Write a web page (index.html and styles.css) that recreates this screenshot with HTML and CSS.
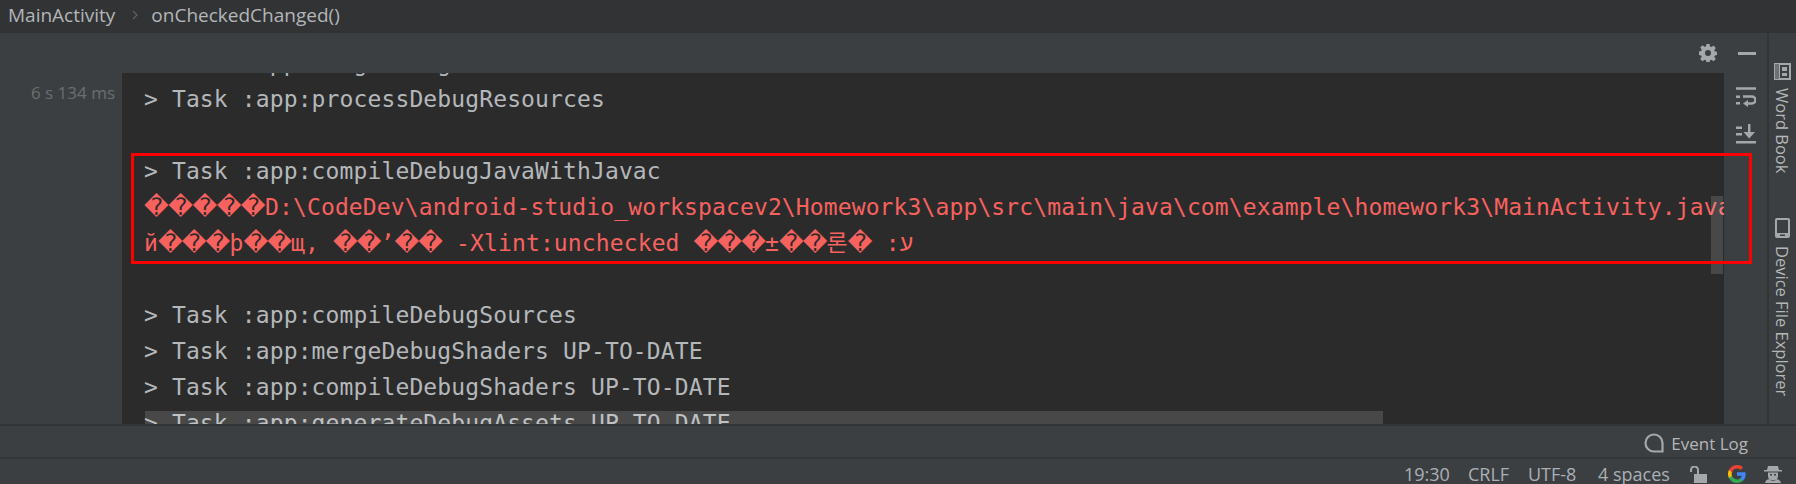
FILE: index.html
```html
<!DOCTYPE html>
<html lang="en">
<head>
<meta charset="utf-8">
<title>Build output</title>
<link rel="stylesheet" href="styles.css">
</head>
<body>
<div class="app">
  <header class="crumbs">
    <span>MainActivity</span>
    <svg class="chev" viewBox="0 0 8 12" width="8" height="12"><path d="M2 2l4 4-4 4" fill="none" stroke="#5f6264" stroke-width="1.2"/></svg>
    <span>onCheckedChanged()</span>
  </header>
  <div class="middle">
    <main class="panel">
      <div class="toolbar">
        <svg class="gear" viewBox="0 0 18 18" width="18" height="18"><path fill="#a5a8aa" fill-rule="evenodd" d="M7.400 0h3.200l.4 2.500 1.500.6 2-1.500 2.300 2.300-1.500 2 .6 1.500 2.100.4v3.200l-2.100.4-.6 1.500 1.500 2-2.300 2.300-2-1.500-1.500.6-.4 2.100H7.400L7 16.300l-1.500-.6-2 1.500-2.300-2.300 1.500-2-.6-1.500L0 11V7.400l2.100-.4.6-1.500-1.500-2 2.300-2.300 2 1.500L7 2.500zM9 6a3 3 0 1 0 0 6 3 3 0 0 0 0-6z"/></svg>
        <span class="minus"></span>
      </div>
      <div class="content">
        <div class="gutter">6 s 134 ms</div>
        <div class="console">
          <div class="lines">
            <p class="line">&gt; Task :app:mergeDebugResources</p>
            <p class="line">&gt; Task :app:processDebugResources</p>
            <p class="line">&nbsp;</p>
            <p class="line">&gt; Task :app:compileDebugJavaWithJavac</p>
            <p class="line err"><span class="bad">�����</span>D:\CodeDev\android-studio_workspacev2\Homework3\app\src\main\java\com\example\homework3\MainActivity.java</p>
            <p class="line err tight">й<span class="bad">���</span>þ<span class="bad">��</span>щ, <span class="bad">��</span>ʼ<span class="bad">��</span> -Xlint:unchecked <span class="bad">���</span>±<span class="bad">��</span><span class="kr">론</span><span class="bad">�</span> :ע</p>
            <p class="line">&nbsp;</p>
            <p class="line">&gt; Task :app:compileDebugSources</p>
            <p class="line">&gt; Task :app:mergeDebugShaders UP-TO-DATE</p>
            <p class="line">&gt; Task :app:compileDebugShaders UP-TO-DATE</p>
            <p class="line">&gt; Task :app:generateDebugAssets UP-TO-DATE</p>
          </div>
          <span class="vthumb"></span>
          <span class="hthumb"></span>
        </div>
        <div class="tools">
          <svg viewBox="0 0 20 20" width="20" height="20"><path fill="none" stroke="#a5a8aa" stroke-width="2.400" d="M0 1.500h20M7 9.500h9a3.200 3.200 0 0 1 0 7h-6"/><path fill="#a5a8aa" d="M12 13v7l-5-3.500zM0 8.500h4v2.400H0zM0 15h4v2.400H0z"/></svg>
          <svg viewBox="0 0 20 20" width="20" height="20"><path fill="#a5a8aa" d="M0 2.500h6v2.400H0zM0 9h6v2.400H0zM0 17h20v2.400H0zM12 0h2.400v8H19l-5.800 6.500L7.500 8H12z"/></svg>
        </div>
      </div>
      <span class="redbox"></span>
    </main>
    <aside class="side">
      <div class="side-item first">
        <svg viewBox="0 0 17 17" width="17" height="17"><path fill="#a5a8aa" fill-rule="evenodd" d="M0 0h17v17H0zM6 2v13h9V2zM8 4h5v4H8zM8 10h5v3H8z"/><path fill="#6e7173" d="M1 1h4v15H1z"/></svg>
        <span class="vtext">Word Book</span>
      </div>
      <div class="side-item second">
        <svg viewBox="0 0 15 20" width="15" height="20"><path fill="#a5a8aa" fill-rule="evenodd" d="M2 0h11a2 2 0 0 1 2 2v16a2 2 0 0 1-2 2H2a2 2 0 0 1-2-2V2a2 2 0 0 1 2-2zM2 2v13h11V2zM5 16.500h5V18H5z"/></svg>
        <span class="vtext">Device File Explorer</span>
      </div>
    </aside>
  </div>
  <div class="eventbar">
    <svg viewBox="0 0 20 20" width="20" height="20"><path fill="none" stroke="#a5a8aa" stroke-width="2.200" d="M18.500 18.500H10a8.500 8.500 0 1 1 8.500-8.500z"/></svg>
    <span>Event Log</span>
  </div>
  <footer class="status">
    <span class="s-time">19:30</span>
    <span class="s-crlf">CRLF</span>
    <span class="s-enc">UTF-8</span>
    <span class="s-ind">4 spaces</span>
    <svg class="s-lock" viewBox="0 0 17 17" width="17" height="17"><path fill="none" stroke="#a5a8aa" stroke-width="2" d="M1 6V4a3.500 3.500 0 0 1 7 0v4"/><path fill="#a5a8aa" d="M4 8h13v9H4z"/></svg>
    <svg class="s-g" viewBox="0 0 18 18" width="18" height="18"><path fill="#4285f4" d="M17.640 9.200c0-.64-.06-1.250-.16-1.840H9v3.480h4.840a4.100 4.100 0 0 1-1.800 2.700v2.260h2.920c1.700-1.570 2.680-3.880 2.680-6.600z"/><path fill="#34a853" d="M9 18c2.430 0 4.470-.8 5.960-2.180l-2.920-2.260a5.430 5.430 0 0 1-8.090-2.850H.96v2.330A9 9 0 0 0 9 18z"/><path fill="#fbbc05" d="M3.950 10.710a5.320 5.320 0 0 1 0-3.420V4.960H.96a9 9 0 0 0 0 8.080z"/><path fill="#ea4335" d="M9 3.580c1.320 0 2.510.45 3.440 1.350l2.580-2.580A9 9 0 0 0 .96 4.960l2.990 2.330A5.360 5.360 0 0 1 9 3.580z"/></svg>
    <svg class="s-hat" viewBox="0 0 18 18" width="18" height="18"><path fill="#a5a8aa" fill-rule="evenodd" d="M4 1h10l1 4h3v1.500H0V5h3zM4 7.500h10V11a5 5 0 0 1-10 0zM6 9v1.500h2V9zM10 9v1.500h2V9zM1 18c.5-2.500 2-3.500 4-3.800 2.500 1.300 5.500 1.300 8 0 2 .3 3.500 1.300 4 3.800z"/></svg>
  </footer>
</div>
</body>
</html>
```
FILE: styles.css
```css
* { box-sizing: border-box; }
html, body { margin: 0; padding: 0; background: #3c3f41; }
.app {
  width: 1796px; height: 484px; overflow: hidden;
  display: flex; flex-direction: column;
  font-family: "Open Sans", "Noto Sans", sans-serif;
  color: #bbbbbb;
}
.crumbs {
  height: 33px; flex: none; background: #313335; border-bottom: 2px solid #323232;
  display: flex; align-items: center; padding: 0 0 1px 8px;
  font-size: 19px; color: #b4b6b8;
}
.chev { margin: 0 12px 0 16px; }
.middle { flex: none; height: 393px; display: flex; border-bottom: 2px solid #323436; }
.panel { position: relative; width: 1767px; display: flex; flex-direction: column; }
.toolbar { height: 40px; flex: none; display: flex; align-items: center; justify-content: flex-end; padding: 0 11px 0 0; gap: 21px; }
.gear { display: block; }
.minus { width: 18px; height: 3px; background: #a5a8aa; }
.content { flex: 1; min-height: 0; display: flex; }
.gutter { width: 122px; flex: none; padding: 9px 7px 0 0; text-align: right; font-size: 17px; color: #6b6e70; line-height: 22px; white-space: nowrap; }
.console { position: relative; width: 1602px; flex: none; background: #2b2b2b; overflow: hidden; }
.lines { margin-top: -28px; padding-left: 22px; }
.line {
  margin: 0; height: 36px; line-height: 36px; white-space: pre;
  font-family: "DejaVu Sans Mono", "Liberation Mono", monospace;
  font-size: 23px; letter-spacing: .12px; color: #b4b8bb;
}
.err { color: #f7625f; }
.bad { font-family: "DejaVu Sans", sans-serif; font-size: 24px; letter-spacing: -.4px; line-height: 0; }
.tight .bad { letter-spacing: -.8px; }
.kr { font-family: "Noto Sans CJK KR", sans-serif; font-size: 23px; line-height: 0; }
.vthumb { position: absolute; right: 1px; top: 123px; width: 12px; height: 78px; background: rgba(255,255,255,.14); }
.hthumb { position: absolute; left: 23px; bottom: 0; width: 1238px; height: 13px; background: rgba(255,255,255,.14); }
.tools { flex: 1; display: flex; flex-direction: column; align-items: center; gap: 17px; padding: 14px 0 0 0; }
.redbox { position: absolute; left: 131px; top: 120px; width: 1621px; height: 111px; border: 3px solid #ff0000; }
.side { width: 29px; flex: none; border-left: 2px solid #323436; display: flex; flex-direction: column; align-items: center; }
.side-item { display: flex; flex-direction: column; align-items: center; gap: 8px; font-size: 16.500px; color: #b4b6b8; }
.first { padding-top: 30px; }
.second { padding-top: 45px; }
.vtext { writing-mode: vertical-rl; line-height: 17px; white-space: nowrap; }
.eventbar {
  height: 33px; flex: none; border-bottom: 2px solid #333537;
  display: flex; align-items: center; justify-content: flex-end; gap: 7px; padding: 3px 48px 0 0;
  font-size: 17px; color: #b4b6b8;
}
.status {
  flex: 1; display: flex; align-items: center; padding: 3px 0 0 1404px; font-size: 18px; color: #a9b0b6;
}
.status > * { flex: none; }
.s-time { width: 64px; }
.s-crlf { width: 60px; }
.s-enc { width: 70px; }
.s-ind { width: 92px; }
.s-lock { margin-right: 21px; }
.s-g { margin-right: 18px; }
```
